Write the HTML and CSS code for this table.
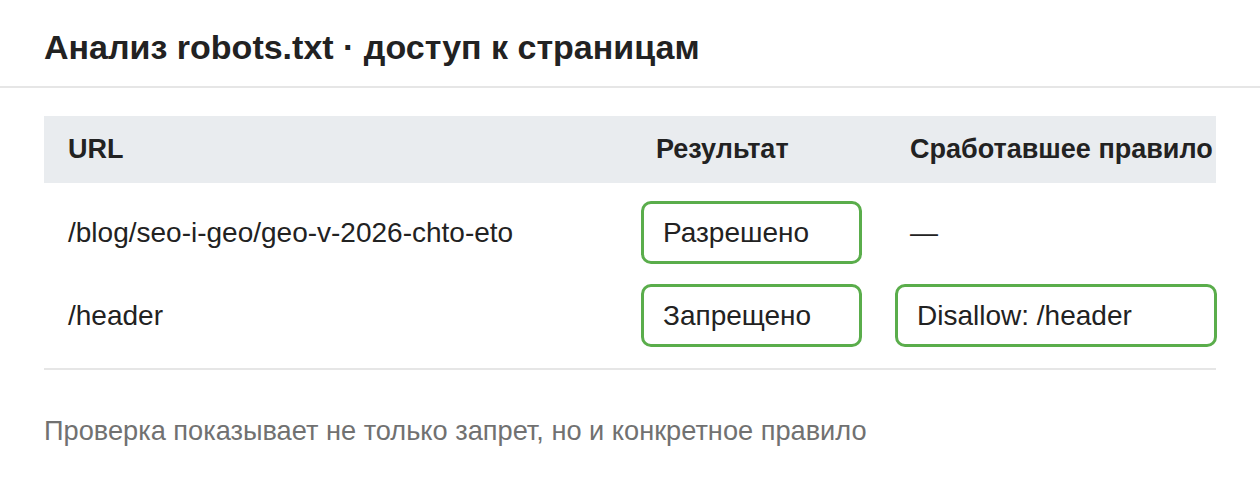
FILE: index.html
```html
<!DOCTYPE html>
<html lang="ru">
<head>
    <meta charset="UTF-8">
    <meta name="viewport" content="width=device-width, initial-scale=1.0">
    <title>Анализ robots.txt</title>
    <link rel="stylesheet" href="styles.css">
</head>
<body>

    <!-- Panel title -->
    <div class="panel-head">
        <h1>Анализ robots.txt · доступ к страницам</h1>
    </div>

    <!-- Results table -->
    <div class="panel-body">
        <table class="check-table">
            <colgroup>
                <col class="col-url">
                <col class="col-result">
                <col class="col-rule">
            </colgroup>
            <thead>
                <tr>
                    <th>URL</th>
                    <th>Результат</th>
                    <th>Сработавшее правило</th>
                </tr>
            </thead>
            <tbody>
                <tr>
                    <td>/blog/seo-i-geo/geo-v-2026-chto-eto</td>
                    <td><span class="mark mark-result">Разрешено</span></td>
                    <td>—</td>
                </tr>
                <tr>
                    <td>/header</td>
                    <td><span class="mark mark-result">Запрещено</span></td>
                    <td><span class="mark mark-rule">Disallow: /header</span></td>
                </tr>
            </tbody>
        </table>

        <p class="note">Проверка показывает не только запрет, но и конкретное правило</p>
    </div>

</body>
</html>
```

FILE: styles.css
```css
body {
    font-family: "Liberation Sans", Arial, sans-serif;
    color: #222;
    background-color: #fff;
    margin: 0;
}
.panel-head {
    border-bottom: 2px solid #e6e6e6;
    padding: 30px 44px 22px;
}
.panel-head h1 {
    margin: 0;
    font-size: 34px;
    line-height: 34px;
    font-weight: bold;
    color: #222;
}
.panel-body {
    padding: 28px 44px 0;
}
.check-table {
    width: 100%;
    table-layout: fixed;
    border-collapse: collapse;
    border-bottom: 2px solid #e6e6e6;
}
.col-url {
    width: 588px;
}
.col-result {
    width: 254px;
}
.check-table th {
    background-color: #e9ecef;
    text-align: left;
    font-size: 27px;
    font-weight: bold;
    height: 67px;
    padding: 0 24px;
    white-space: nowrap;
}
.check-table td {
    font-size: 28px;
    padding: 10px 24px;
    vertical-align: middle;
    white-space: nowrap;
}
.check-table tbody tr:first-child td {
    padding-top: 18px;
}
.check-table tbody tr:last-child td {
    padding-bottom: 21px;
}
.mark {
    display: block;
    box-sizing: border-box;
    height: 63px;
    line-height: 57px;
    margin-left: -15px;
    padding: 0 19px;
    border: 3px solid #5aad4b;
    border-radius: 10px;
}
.mark-result {
    width: 221px;
}
.mark-rule {
    width: 322px;
}
.note {
    margin: 0;
    padding: 45px 0 0;
    font-size: 27.2px;
    color: #717171;
}
```
